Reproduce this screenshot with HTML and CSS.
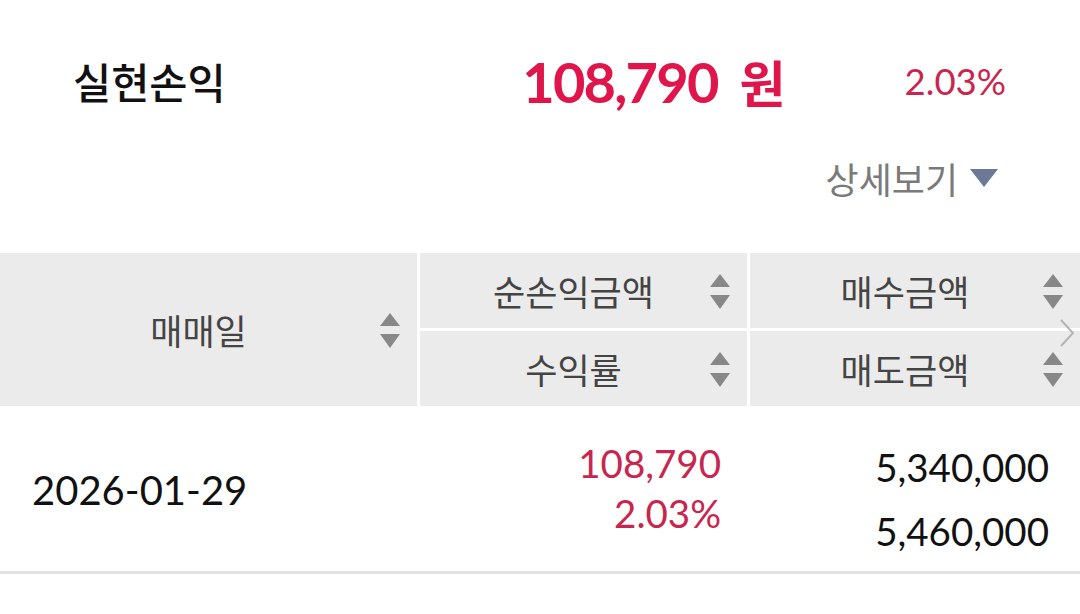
FILE: index.html
```html
<!DOCTYPE html>
<html lang="ko">
<head>
<meta charset="utf-8">
<title>실현손익</title>
<link rel="stylesheet" href="styles.css">
</head>
<body>
<div class="page">
  <div class="summary">
    <div class="summary-label">실현손익</div>
    <div class="summary-value"><span class="num">108,790</span><span class="won">원</span></div>
    <div class="summary-rate">2.03%</div>
  </div>
  <div class="detail">
    <span class="detail-text">상세보기</span>
    <svg class="detail-caret" width="28" height="18" viewBox="0 0 28 18"><polygon points="0,0 28,0 14,18" fill="#6b7896"/></svg>
  </div>

  <div class="thead">
    <div class="th th-date">
      <span class="th-text">매매일</span>
      <svg class="sort" width="20" height="35" viewBox="0 0 20 35"><polygon points="10,0 20,13 0,13" fill="#888"/><polygon points="0,21 20,21 10,35" fill="#888"/></svg>
    </div>
    <div class="th">
      <span class="th-text">순손익금액</span>
      <svg class="sort" width="20" height="35" viewBox="0 0 20 35"><polygon points="10,0 20,13 0,13" fill="#888"/><polygon points="0,21 20,21 10,35" fill="#888"/></svg>
    </div>
    <div class="th">
      <span class="th-text">매수금액</span>
      <svg class="sort" width="20" height="35" viewBox="0 0 20 35"><polygon points="10,0 20,13 0,13" fill="#888"/><polygon points="0,21 20,21 10,35" fill="#888"/></svg>
    </div>
    <div class="th">
      <span class="th-text">수익률</span>
      <svg class="sort" width="20" height="35" viewBox="0 0 20 35"><polygon points="10,0 20,13 0,13" fill="#888"/><polygon points="0,21 20,21 10,35" fill="#888"/></svg>
    </div>
    <div class="th">
      <span class="th-text">매도금액</span>
      <svg class="sort" width="20" height="35" viewBox="0 0 20 35"><polygon points="10,0 20,13 0,13" fill="#888"/><polygon points="0,21 20,21 10,35" fill="#888"/></svg>
    </div>
    <svg class="scroll-hint" width="16" height="30" viewBox="0 0 16 30"><polyline points="2,2 14,15 2,28" fill="none" stroke="#b4b4b4" stroke-width="2"/></svg>
  </div>

  <div class="trow">
    <div class="td td-date">2026-01-29</div>
    <div class="td td-profit">
      <div>108,790</div>
      <div>2.03%</div>
    </div>
    <div class="td td-amount">
      <div>5,340,000</div>
      <div>5,460,000</div>
    </div>
  </div>
</div>
</body>
</html>
```

FILE: styles.css
```css
* { box-sizing: border-box; }
html, body { margin: 0; padding: 0; background: #fff; }
body {
  font-family: "Noto Sans CJK KR", "Noto Sans", sans-serif;
  color: #111;
}
.page { width: 1080px; height: 614px; overflow: hidden; }

.summary {
  display: flex;
  align-items: center;
  height: 152px;
  margin-top: 5px;
  padding: 0 74px 0 73px;
}
.summary-label {
  flex: 1;
  font-size: 41.5px;
  font-weight: 500;
  color: #111;
}
.summary-value {
  display: flex;
  align-items: center;
  color: #e0154b;
  white-space: nowrap;
}
.summary-value .num {
  font-family: "Lato", sans-serif;
  font-size: 56px;
  font-weight: 700;
  letter-spacing: -1.8px;
}
.summary-value .won {
  margin-left: 22px;
  font-family: "Noto Sans CJK KR", sans-serif;
  font-size: 50px;
  font-weight: 700;
}
.summary-rate {
  margin-left: 119px;
  font-family: "Lato", sans-serif;
  font-size: 36.5px;
  color: #c8264f;
}

.detail {
  display: flex;
  align-items: center;
  justify-content: flex-end;
  height: 40px;
  margin-top: 1px;
  padding-right: 82px;
  gap: 12px;
}
.detail-text {
  font-size: 36px;
  color: #7a7a7a;
}

.thead {
  position: relative;
  margin-top: 55px;
  display: grid;
  grid-template-columns: 417px 327px 330px;
  grid-template-rows: 75px 75px;
  column-gap: 3px;
  row-gap: 3px;
}
.th {
  position: relative;
  background: #ebebeb;
  display: flex;
  align-items: center;
  justify-content: center;
  padding-right: 20px;
}
.th-date { grid-row: 1 / span 2; }
.th-text {
  font-size: 35px;
  color: #444;
  line-height: 1;
}
.sort {
  position: absolute;
  right: 17px;
  top: 50%;
  margin-top: -17px;
}
.scroll-hint {
  position: absolute;
  right: 5px;
  top: 65px;
}

.trow {
  display: grid;
  grid-template-columns: 420px 330px 330px;
  height: 168px;
  border-bottom: 3px solid #e2e2e2;
  font-family: "Lato", sans-serif;
}
.td-date {
  display: flex;
  align-items: center;
  padding-left: 32px;
  font-size: 40px;
  color: #111;
  padding-top: 2px;
}
.td-profit {
  text-align: right;
  padding-right: 29px;
  padding-top: 32px;
  font-size: 38.5px;
  line-height: 50px;
  color: #c8264f;
}
.td-amount {
  text-align: right;
  padding-right: 31px;
  padding-top: 29px;
  font-size: 38.5px;
  line-height: 64px;
  color: #111;
}
```
